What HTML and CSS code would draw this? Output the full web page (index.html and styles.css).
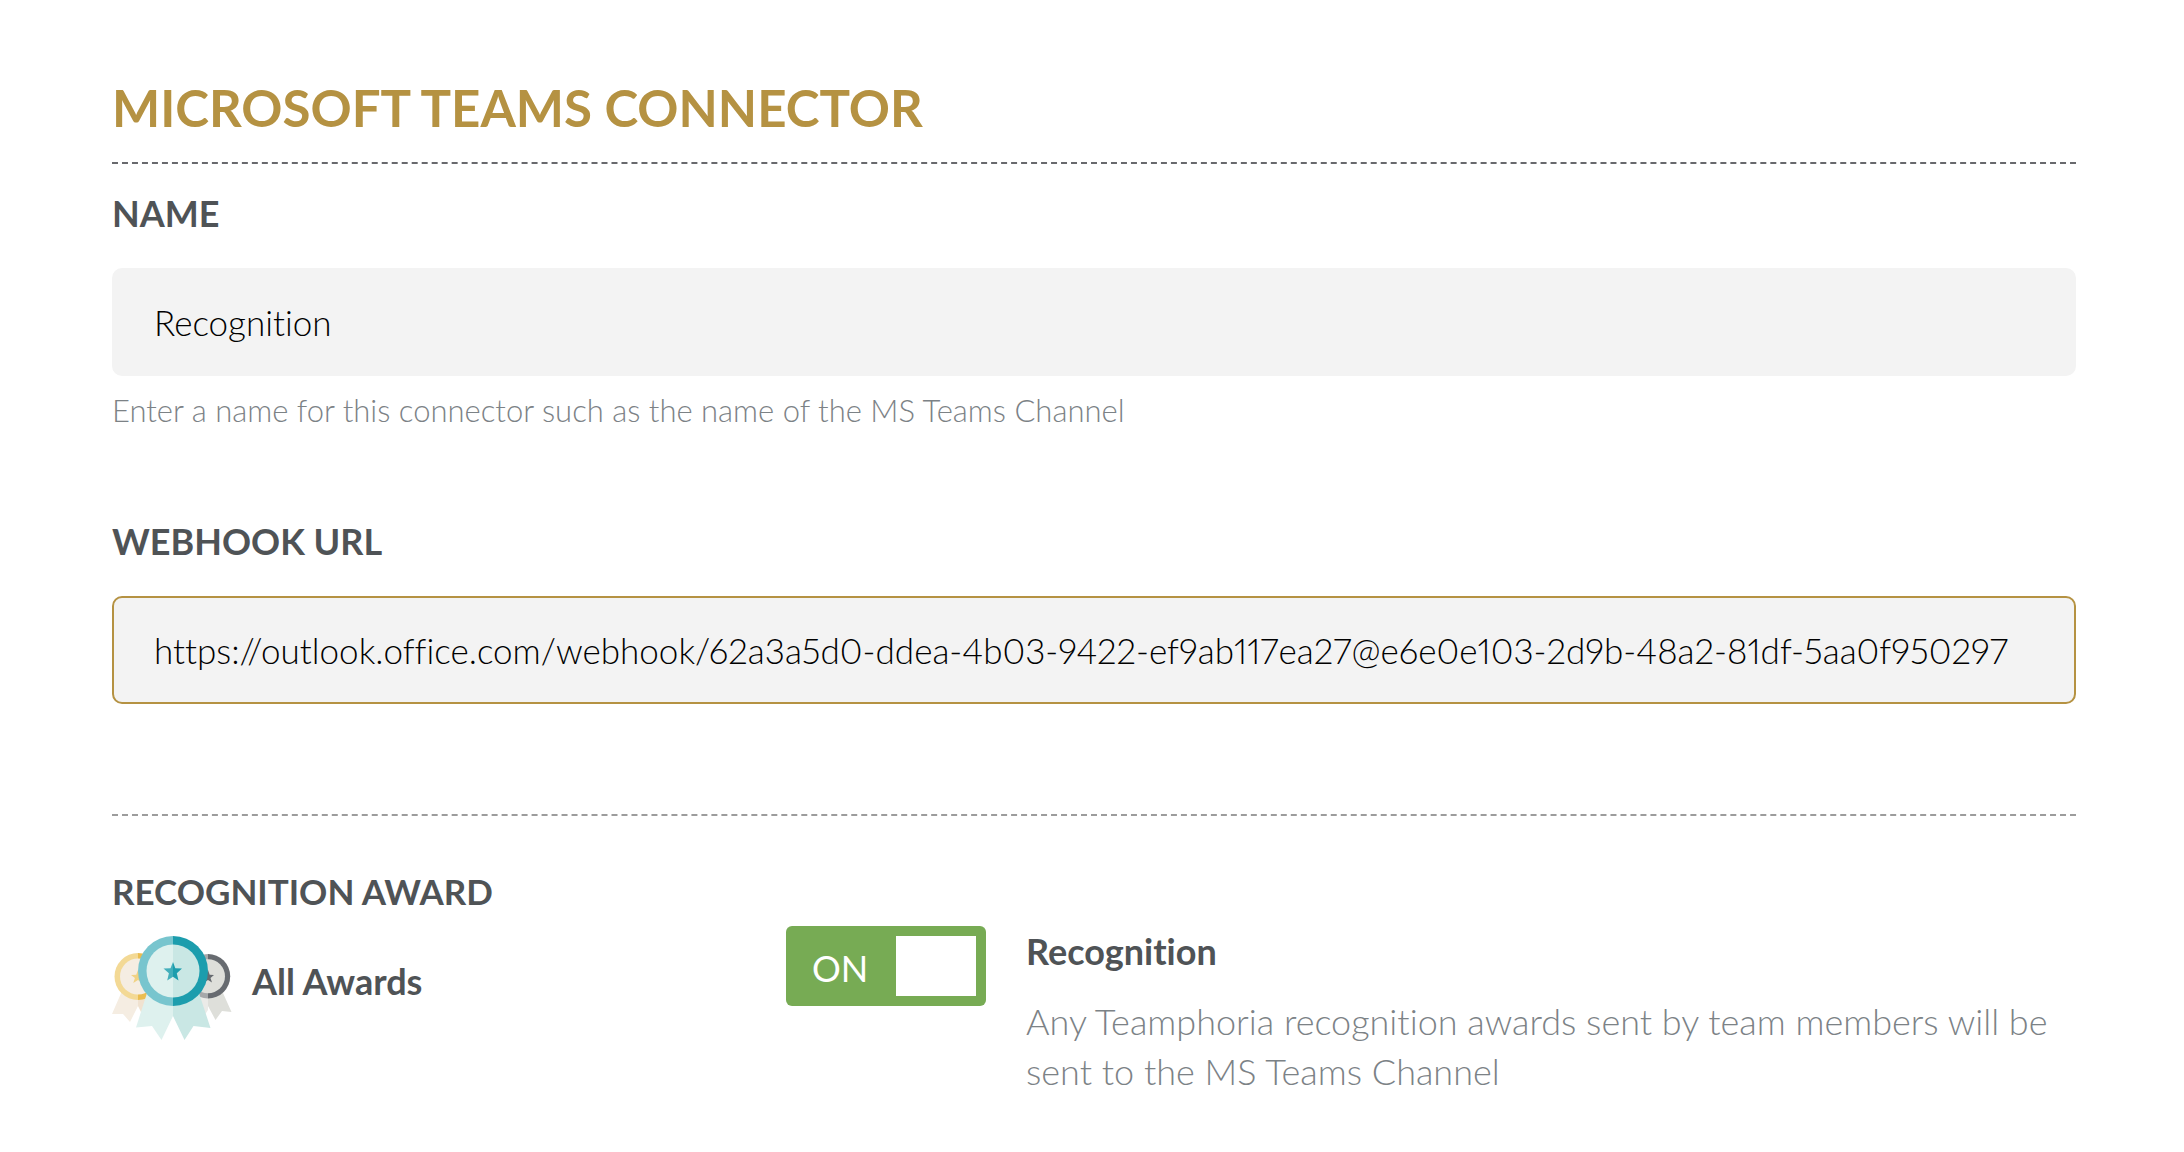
FILE: index.html
```html
<!DOCTYPE html>
<html lang="en">
<head>
<meta charset="utf-8">
<meta name="viewport" content="width=device-width, initial-scale=1">
<title>Microsoft Teams Connector</title>
<link rel="stylesheet" href="styles.css">
</head>
<body>
<main class="page">
  <h1 class="title">MICROSOFT TEAMS CONNECTOR</h1>
  <form class="form">
    <div class="field">
      <label class="label" for="name">NAME</label>
      <input class="input" id="name" type="text" value="Recognition" aria-describedby="name-help">
      <p class="help" id="name-help">Enter a name for this connector such as the name of the MS Teams Channel</p>
    </div>
    <div class="field">
      <label class="label" for="webhook">WEBHOOK URL</label>
      <input class="input input-active" id="webhook" type="text" value="https://outlook.office.com/webhook/62a3a5d0-ddea-4b03-9422-ef9ab117ea27@e6e0e103-2d9b-48a2-81df-5aa0f950297">
    </div>
    <section class="awards">
      <div class="award">
        <h2 class="award-heading">RECOGNITION AWARD</h2>
        <div class="award-item">
          <svg class="badge" viewBox="0 0 120 104" aria-hidden="true">
            <path fill="#f5ede2" d="M10 55 0 78 11 78 18 86 26 70V57z"/>
            <path fill="#f0e2d0" d="M26 57V70L34 86 46 57z"/>
            <path fill="#f3d995" d="M26 17a23.500 23.500 0 0 0 0 47z"/>
            <path fill="#ebbd50" d="M26 17a23.500 23.500 0 0 1 0 47z"/>
            <circle cx="26" cy="40.500" r="18" fill="#f5ede2"/>
            <path fill="#f1d283" d="M26 34 27.700 38.700 33 38.900 28.800 42 30.300 47 26 44 21.300 47 22.900 42 19 38.900 24.200 38.700z"/>
            <path fill="#ebebe8" d="M76 57 96 57V74L88 86z"/>
            <path fill="#dedfda" d="M96 57H111L119.500 76 110 75 103.500 84 96 70z"/>
            <path fill="#a6a8aa" d="M96 18a22.200 22.200 0 0 0 0 44.400z"/>
            <path fill="#676b70" d="M96 18a22.200 22.200 0 0 1 0 44.400z"/>
            <circle cx="96" cy="40.200" r="17" fill="#dedfda"/>
            <path fill="#676b70" d="M96 34 97.700 38.700 102 38.900 98.500 42 100 46.500 96 44 91 47 93 42 89 38.900 94.300 38.700z"/>
            <path fill="#def1ee" d="M35 57 24 91.500 40 90 49.500 104 61 80V57z"/>
            <path fill="#c9e7e4" d="M61 57H87L98.500 92 81.500 90 72.500 104 61 80z"/>
            <path fill="#78c5ce" d="M61 0a35 35 0 0 0 0 70z"/>
            <path fill="#1c9dad" d="M61 0a35 35 0 0 1 0 70z"/>
            <path fill="#def1ee" d="M61 8.500a26.500 26.500 0 0 0 0 53z"/>
            <path fill="#c9e7e4" d="M61 8.500a26.500 26.500 0 0 1 0 53z"/>
            <path fill="#43afbb" d="M61 26 58.500 32.200 51.500 32.600 56.900 37.300 55.200 44.500 61 40.700z"/>
            <path fill="#1c9dad" d="M61 26 63.300 32.200 70 32.600 64.800 37.300 66.500 44.500 61 40.700z"/>
          </svg>
          <span class="strong">All Awards</span>
        </div>
      </div>
      <div class="setting">
        <button class="toggle" type="button" role="switch" aria-checked="true" aria-labelledby="setting-name">
          <span class="toggle-text">ON</span><span class="knob"></span>
        </button>
        <div class="setting-text">
          <h3 class="strong" id="setting-name">Recognition</h3>
          <p class="description">Any Teamphoria recognition awards sent by team members will be sent to the MS Teams Channel</p>
        </div>
      </div>
    </section>
  </form>
</main>
</body>
</html>
```
FILE: styles.css
```css
* { box-sizing: border-box; }

body {
  margin: 0;
  background: #fff;
  color: #4f5356;
  font-family: Lato, "Open Sans", sans-serif;
  font-size: 36px;
  font-variant-ligatures: no-common-ligatures;
  line-height: 50px;
}

h1, h2, h3, p { margin: 0; }

.page { padding: 78px 108px 56px 112px; }

.title {
  padding-bottom: 24px;
  border-bottom: 2px dashed #68696d;
  color: #b59242;
  font-size: 51px;
  line-height: 60px;
  font-weight: 700;
}

.form { padding-top: 24px; }

.field {
  display: flex;
  flex-direction: column;
}

.field + .field { margin-top: 82px; }

.label { font-weight: 700; }

.input {
  width: 100%;
  height: 108px;
  margin-top: 30px;
  padding: 0 40px;
  border: 2px solid #f3f3f3;
  border-radius: 10px;
  background: #f3f3f3;
  color: #000;
  font: inherit;
  font-size: 35px;
  font-weight: 300;
  font-variant-ligatures: no-common-ligatures;
  font-variant-numeric: proportional-nums;
  outline: none;
}

.input-active { border-color: #b59242; }

.help {
  margin-top: 10px;
  color: #7c8286;
  font-size: 31px;
  line-height: 48px;
  font-weight: 300;
}

.awards {
  display: grid;
  grid-template-columns: 674fr 1290fr;
  margin-top: 110px;
  padding-top: 50px;
  border-top: 2px dashed #9c9c9c;
}

.award-heading {
  font-size: 35px;
  font-weight: 700;
}

.award-item {
  display: flex;
  align-items: flex-start;
  gap: 20px;
  padding-top: 20px;
}

.award-item .strong { padding-top: 20px; }

.badge {
  width: 120px;
  height: 104px;
}

.strong {
  font-size: 36px;
  font-weight: 700;
}

.setting {
  display: flex;
  align-items: flex-start;
  gap: 40px;
  padding-top: 60px;
}

.toggle {
  display: flex;
  flex: none;
  align-items: center;
  justify-content: space-between;
  width: 200px;
  height: 80px;
  padding: 10px 10px 10px 26px;
  border: 0;
  border-radius: 6px;
  background: #77ab54;
  color: #fff;
  font: inherit;
}

.toggle-text { padding-top: 4px; }

.knob {
  width: 80px;
  height: 60px;
  background: #fff;
}

.description {
  margin-top: 20px;
  color: #7c8286;
  font-weight: 300;
}
```
